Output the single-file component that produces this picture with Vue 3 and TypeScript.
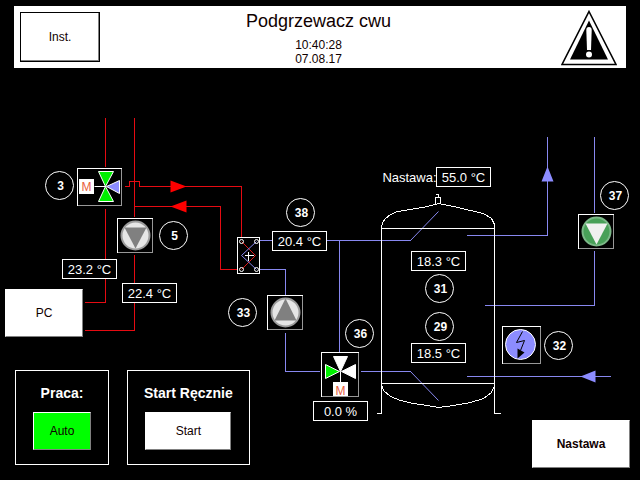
<script setup lang="ts">
import { ref } from 'vue'

interface Reading {
  x: number
  y: number
  text: string
}

interface Badge {
  x: number
  y: number
  id: number
}

interface Pump {
  x: number
  y: number
  up: boolean
  running: boolean
}

const time = '10:40:28'
const date = '07.08.17'
const mode = ref('Auto')

const readings: Reading[] = [
  { x: 62, y: 259, text: '23.2 °C' },
  { x: 122, y: 283, text: '22.4 °C' },
  { x: 272, y: 231, text: '20.4 °C' },
  { x: 436, y: 167, text: '55.0 °C' },
  { x: 411, y: 251, text: '18.3 °C' },
  { x: 411, y: 343, text: '18.5 °C' },
  { x: 313, y: 401, text: '0.0 %' },
]

const badges: Badge[] = [
  { x: 59, y: 185, id: 3 },
  { x: 173, y: 235, id: 5 },
  { x: 300, y: 212, id: 38 },
  { x: 242, y: 312, id: 33 },
  { x: 359, y: 333, id: 36 },
  { x: 439, y: 288, id: 31 },
  { x: 439, y: 326, id: 29 },
  { x: 614, y: 195, id: 37 },
  { x: 558, y: 345, id: 32 },
]

const pumps: Pump[] = [
  { x: 135, y: 235, up: false, running: false },
  { x: 285, y: 312, up: true, running: false },
  { x: 596, y: 231, up: false, running: true },
]
</script>

<template>
  <div class="screen">
    <header class="topbar">
      <button type="button" class="inst">Inst.</button>
      <div class="heading">
        <h1>Podgrzewacz cwu</h1>
        <time>{{ time }}</time>
        <time>{{ date }}</time>
      </div>
      <svg class="warning" viewBox="0 0 56 56" role="img" aria-label="Alarm">
        <path d="M28 1.5 L55 54.5 H1 Z" fill="#fff" stroke="#000" stroke-width="1.6" />
        <path d="M28 10.5 L47 49.5 H9 Z" fill="#000" />
        <path d="M25.3 20 Q25.3 17 28 17 T30.7 20 L30 40 H26 Z" fill="#fff" />
        <circle cx="28" cy="44.5" r="3" fill="#fff" />
      </svg>
    </header>

    <main class="stage">
      <svg class="diagram" viewBox="0 68 640 412" aria-label="Schemat instalacji">
        <g class="shift">
          <g class="pipe hot">
            <path d="M105 117 V166 M105 208 V302 H84" />
            <path d="M134 117 V216 M134 254 V330 H84" />
            <path d="M124 186 H129 V181 H139 V186 H241 V241" />
            <path d="M134 206 H220 V269 H241" />
          </g>
          <path class="hot-fill" d="M170 180 L186 186 L170 192 Z M186 200 L170 206 L186 212 Z" />

          <g class="pipe cold">
            <path d="M256 240 H410 M339 240 V351" />
            <path d="M256 269 H285 V294 M285 332 V371 H319" />
            <path d="M360 371 H410 M466 235 H547 V136" />
            <path d="M594 136 V212 M594 250 V305 H484" />
            <path d="M466 376 H610" />
          </g>
          <path class="cold-slope" d="M410 240 L438 211 M410 371 L438 400" />
          <path class="cold-fill" d="M547 166 L553 181 H541 Z M580 376 L595 370 V382 Z" />

          <g class="outline">
            <path d="M376 413 H381 V227 M494 227 V413 H500 M381 228 H494 M381 383 H494" />
            <path d="M381 228 L382 222 L385 218 L390 214 L397 211 L410 209 L427 206 L438 203 L453 206 L470 210 L483 213 L491 218 L494 224 V228" />
            <path d="M381 384 L383 390 L390 396 L400 400 L413 403 L427 405 L438 407 L453 405 L470 402 L483 398 L491 392 L494 385" />
            <path d="M435 203 V197 H440 V203 M435 194 H438 V197" />
          </g>

          <!-- heat exchanger -->
          <rect class="box" x="237" y="237" width="22" height="36" />
          <path class="hot-thin" d="M241 241 L255 255 L241 269" />
          <path class="cold-thin" d="M256 241 L241 255 L256 269" />
          <path class="cross" d="M244 255 H253 M248 251 V260" />
          <g class="ports">
            <circle cx="241" cy="241" r="2" />
            <circle cx="256" cy="241" r="2" />
            <circle cx="241" cy="269" r="2" />
            <circle cx="256" cy="269" r="2" />
          </g>

          <!-- three-way valves -->
          <rect class="box" x="77" y="168" width="44" height="37" />
          <path class="edge" d="M121 168 V205 H77" />
          <g class="valve">
            <path d="M94 186 H105" />
            <path class="open" d="M98 171 H113 L105 186 Z M98 201 H113 L105 186 Z" />
            <path class="cold-fill" d="M106 186 L119 180 V193 Z" />
          </g>
          <rect class="motor" x="79" y="179" width="14" height="14" />
          <text class="motor-label" x="86" y="190">M</text>

          <rect class="box" x="321" y="352" width="37" height="44" />
          <path class="edge" d="M358 352 V396 H321" />
          <g class="valve">
            <path d="M340 371 V382" />
            <path class="closed" d="M333 356 H347 L340 371 Z M355 364 V378 L341 371 Z" />
            <path class="open" d="M325 364 V378 L339 371 Z" />
          </g>
          <rect class="motor" x="333" y="382" width="14" height="13" />
          <text class="motor-label" x="340" y="394">M</text>

          <g v-for="p in pumps" :key="p.x" :transform="`translate(${p.x} ${p.y})`">
            <rect class="box" x="-18" y="-17" width="35" height="34" />
            <path class="edge" d="M17 -17 V17 H-18" />
            <circle class="pump" :class="{ running: p.running }" r="14" />
            <path
              class="impeller"
              :class="{ running: p.running }"
              :d="p.up ? 'M0 -14 L11 8 H-11 Z' : 'M0 13 L11 -8 H-11 Z'"
            />
          </g>

          <!-- electric heater -->
          <rect class="box" x="502" y="326" width="38" height="37" />
          <path class="edge" d="M540 326 V363 H502" />
          <circle class="heater" cx="520" cy="344" r="15" />
          <path class="bolt" d="M522 331 L516 342 L524 340 L520 350" />
          <path d="M517 348 L524 352 L517 358 Z" />

          <g v-for="r in readings" :key="`${r.x}-${r.y}`">
            <rect class="field" :x="r.x" :y="r.y" width="54" height="19" />
            <text class="value" :x="r.x + 27" :y="r.y + 14">{{ r.text }}</text>
          </g>
          <text class="value" x="409" y="181">Nastawa:</text>

          <g v-for="b in badges" :key="b.id">
            <circle class="badge" :cx="b.x" :cy="b.y" r="14" />
            <text class="badge-id" :x="b.x + 1" :y="b.y + 4">{{ b.id }}</text>
          </g>
        </g>

        <foreignObject x="5" y="289" width="78" height="48">
          <button type="button" class="plate fill">PC</button>
        </foreignObject>
      </svg>

      <div class="controls">
        <section class="panel">
          <h2>Praca:</h2>
          <button type="button" class="plate active">{{ mode }}</button>
        </section>
        <section class="panel">
          <h2>Start Ręcznie</h2>
          <button type="button" class="plate wide">Start</button>
        </section>
        <button type="button" class="plate setpoint">Nastawa</button>
      </div>
    </main>
  </div>
</template>

<style>
body {
  margin: 0;
  background: #000;
}
</style>

<style scoped>
.screen {
  background: #000;
  color: #fff;
  font-family: 'Liberation Sans', Arial, sans-serif;
  font-size: 12px;
  padding-top: 6px;
}

.topbar {
  display: grid;
  grid-template-columns: 1fr auto 1fr;
  align-items: start;
  margin: 0 14px;
  padding: 4px 9px 0 6px;
  min-height: 58px;
  background: #fff;
  color: #100000;
}

button {
  box-sizing: border-box;
  padding: 0;
  font: inherit;
  color: #100000;
  cursor: pointer;
}

.inst {
  width: 80px;
  height: 50px;
  margin-top: 2px;
  background: #fff;
  border: 1px solid #000;
  box-shadow: inset -1px -1px #808080;
}

.heading {
  display: flex;
  flex-direction: column;
  align-items: center;
  line-height: 14px;
}

h1 {
  margin: 0 0 6px;
  font-size: 18px;
  font-weight: 400;
  line-height: 22px;
}

.warning {
  justify-self: end;
  width: 56px;
  height: 56px;
}

.stage {
  display: grid;
}

.diagram,
.controls {
  grid-area: 1 / 1;
}

.diagram {
  display: block;
  width: 100%;
}

.shift {
  transform: translate(0.5px, 0.5px);
}

.pipe,
.outline,
.box,
.edge,
.field,
.cross {
  fill: none;
  stroke: #fff;
  shape-rendering: crispEdges;
}

.box,
.field {
  fill: #000;
}

.edge {
  stroke: #989898;
}

.hot {
  stroke: #e60b12;
}

.cold {
  stroke: #8888f0;
}

.cold-slope {
  fill: none;
  stroke: #8888f0;
}

.hot-fill {
  fill: #ff0000;
}

.cold-fill {
  fill: #8c8cff;
}

.hot-thin {
  fill: none;
  stroke: #e01818;
}

.cold-thin {
  fill: none;
  stroke: #8888f0;
}

.ports {
  fill: none;
  stroke: #fff;
}

.valve {
  stroke: #fff;
}

.open {
  fill: #00f000;
}

.closed {
  fill: #fff;
}

.motor {
  fill: #fff;
  stroke: #fff;
}

.motor-label {
  fill: #e8603c;
  font-size: 12px;
  text-anchor: middle;
}

.pump {
  fill: #e6e6e6;
  stroke: #9c9c9c;
  stroke-width: 2;
}

.pump.running {
  fill: #48a058;
  stroke: #7cb888;
}

.impeller {
  fill: #808080;
}

.impeller.running {
  fill: #f0f0f0;
}

.heater {
  fill: #8c8cff;
  stroke: #fff;
}

.bolt {
  fill: none;
  stroke: #000;
}

.value {
  fill: #fff;
  font-size: 13px;
  text-anchor: middle;
}

.badge {
  fill: #000;
  stroke: #fff;
}

.badge-id {
  fill: #fff;
  font-size: 12px;
  font-weight: 700;
  text-anchor: middle;
}

.controls {
  align-self: end;
  display: flex;
  align-items: flex-end;
  gap: 18px;
  padding: 0 10px 12px 15px;
  pointer-events: none;
}

.controls button {
  pointer-events: auto;
}

.panel {
  box-sizing: border-box;
  display: flex;
  flex-direction: column;
  align-items: center;
  gap: 10px;
  min-width: 94px;
  height: 95px;
  margin-bottom: 3px;
  padding: 14px 16px 0;
  border: 1px solid #fff;
}

h2 {
  margin: 0;
  font-size: 14px;
  font-weight: 700;
  line-height: 17px;
  white-space: nowrap;
}

.plate {
  background: #fff;
  border: 1px solid #fff;
  border-right-color: #808080;
  border-bottom-color: #808080;
}

.fill {
  display: block;
  width: 100%;
  height: 100%;
}

.active {
  width: 58px;
  height: 38px;
  background: #00ff00;
}

.wide {
  width: 86px;
  height: 38px;
}

.setpoint {
  width: 98px;
  height: 48px;
  margin-left: auto;
  font-weight: 700;
}
</style>
